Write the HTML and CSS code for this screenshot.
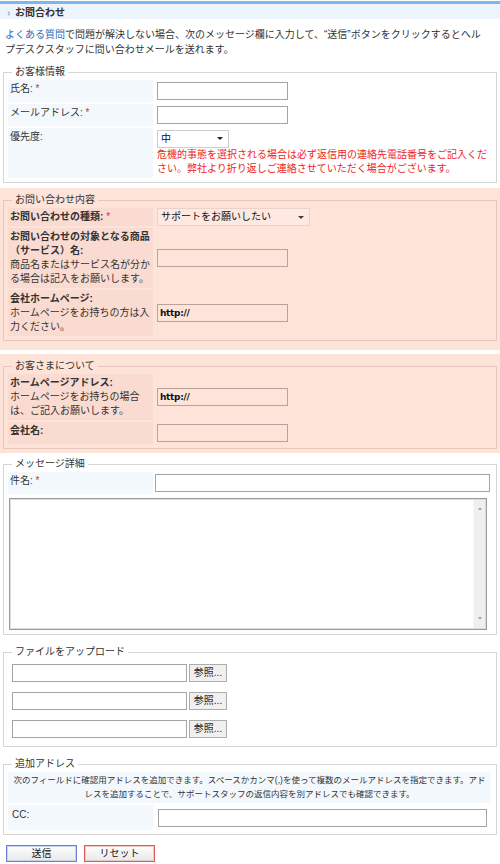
FILE: index.html
```html
<!DOCTYPE html>
<html lang="ja">
<head>
<meta charset="utf-8">
<title>お問合わせ</title>
<link rel="stylesheet" href="styles.css">
</head>
<body>
<div class="page">
  <h1 class="title"><svg class="chev" width="4" height="5" viewBox="0 0 4 5"><polyline points="0.8,0.6 3,2.5 0.8,4.4" fill="none" stroke="#6f93c4" stroke-width="1"/></svg>お問合わせ</h1>
  <p class="intro"><a href="#" class="link">よくある質問</a>で問題が解決しない場合、次のメッセージ欄に入力して、“送信”ボタンをクリックするとヘルプデスクスタッフに問い合わせメールを送れます。</p>

  <form class="form">
    <fieldset class="box">
      <legend>お客様情報</legend>
      <div class="rows">
        <div class="lab">氏名: <span class="req">*</span></div>
        <div class="val"><input class="txt" type="text"></div>
        <div class="lab">メールアドレス: <span class="req">*</span></div>
        <div class="val"><input class="txt" type="text"></div>
        <div class="lab">優先度:</div>
        <div class="val">
          <span class="sel sel-prio"><select><option>中</option></select></span>
          <p class="warn">危機的事態を選択される場合は必ず返信用の連絡先電話番号をご記入ください。弊社より折り返しご連絡させていただく場合がございます。</p>
        </div>
      </div>
    </fieldset>

    <div class="peach">
      <fieldset class="box box-peach">
        <legend>お問い合わせ内容</legend>
        <div class="rows">
          <div class="lab"><b>お問い合わせの種類:</b> <span class="req">*</span></div>
          <div class="val val-tight"><span class="sel sel-kind"><select><option>サポートをお願いしたい</option></select></span></div>
          <div class="lab"><b>お問い合わせの対象となる商品（サービス）名:</b><br>商品名またはサービス名が分かる場合は記入をお願いします。</div>
          <div class="val"><input class="txt" type="text"></div>
          <div class="lab"><b>会社ホームページ:</b><br>ホームページをお持ちの方は入力ください。</div>
          <div class="val"><input class="txt url" type="text" value="http://"></div>
        </div>
      </fieldset>
    </div>

    <div class="peach peach-second">
      <fieldset class="box box-peach">
        <legend>お客さまについて</legend>
        <div class="rows">
          <div class="lab"><b>ホームページアドレス:</b><br>ホームページをお持ちの場合は、ご記入お願いします。</div>
          <div class="val"><input class="txt url" type="text" value="http://"></div>
          <div class="lab"><b>会社名:</b></div>
          <div class="val"><input class="txt" type="text"></div>
        </div>
      </fieldset>
    </div>

    <fieldset class="box">
      <legend>メッセージ詳細</legend>
      <div class="rows">
        <div class="lab">件名: <span class="req">*</span></div>
        <div class="val val-wide"><input class="txt txt-subject" type="text"></div>
      </div>
      <div class="ta-wrap">
        <textarea class="ta"></textarea>
        <div class="sb"><span class="sb-up"></span><span class="sb-down"></span></div>
      </div>
    </fieldset>

    <fieldset class="box">
      <legend>ファイルをアップロード</legend>
      <div class="files">
        <div class="file"><input class="txt txt-file" type="text"><button type="button" class="browse">参照...</button></div>
        <div class="file"><input class="txt txt-file" type="text"><button type="button" class="browse">参照...</button></div>
        <div class="file"><input class="txt txt-file" type="text"><button type="button" class="browse">参照...</button></div>
      </div>
    </fieldset>

    <fieldset class="box">
      <legend>追加アドレス</legend>
      <div class="rows">
        <div class="note">次のフィールドに確認用アドレスを追加できます。スペースかカンマ(,)を使って複数のメールアドレスを指定できます。アド<br>レスを追加することで、サポートスタッフの返信内容を別アドレスでも確認できます。</div>
        <div class="lab lab-cc">CC:</div>
        <div class="val"><input class="txt txt-cc" type="text"></div>
      </div>
    </fieldset>

    <div class="actions">
      <button type="submit" class="btn btn-send">送信</button>
      <button type="reset" class="btn btn-reset">リセット</button>
    </div>
  </form>
</div>
</body>
</html>
```

FILE: styles.css
```css
* {
  box-sizing: border-box;
}

html,
body {
  margin: 0;
  padding: 0;
  background: #fff;
}

body {
  font-family: "Liberation Sans", "Noto Sans CJK JP", sans-serif;
  font-size: 10px;
  line-height: 14px;
  color: #333;
}

.page {
  width: 500px;
}

/* page heading bar */
.title {
  margin: 1px 0 0;
  height: 18px;
  padding: 2px 0 0 7px;
  border-top: 3px solid #7db6ea;
  background: #eef4fd;
  font-size: 10px;
  font-weight: bold;
  line-height: 13px;
  display: flex;
  align-items: center;
  gap: 4px;
}

.chev {
  display: block;
  margin-top: 2px;
}

.intro {
  margin: 0;
  padding: 8px 10px 8px 5px;
  line-height: 15px;
}

.link {
  color: #2a6fc0;
  text-decoration: none;
}

/* fieldsets */
.form {
  margin: 0;
}

.box {
  margin: 0 3px 10px;
  padding: 1px 4px 4px;
  border: 1px solid #d6d6d6;
  min-width: 0;
}

.box legend {
  margin-left: 4px;
  padding: 0 3px;
  font-size: 10px;
  line-height: 14px;
}

.peach {
  background: #fee3d9;
  padding: 5px 0 9px;
  margin: -5px 0 4px;
}

.peach-second {
  margin-top: 0;
  padding-bottom: 4px;
}

.peach .box {
  margin-bottom: 0;
}

.box-peach {
  border-color: #e7c7bc;
}

.rows {
  display: grid;
  grid-template-columns: 145px 1fr;
  gap: 2px;
}

.lab {
  background: #f3f8fd;
  padding: 2px 2px;
  line-height: 14px;
}

.box-peach .lab {
  background: #fadbd2;
}

.lab b {
  font-weight: bold;
}

.req {
  color: #f02020;
}

.val {
  display: flex;
  flex-direction: column;
  justify-content: center;
  align-items: flex-start;
  padding: 2px;
}

.val-tight {
  padding: 0 2px;
}

.val-wide {
  padding: 2px 0 2px 0;
}

.warn {
  margin: 0;
  color: #f01c1c;
  line-height: 14px;
}

/* text boxes */
.txt {
  display: block;
  width: 131px;
  height: 18px;
  margin: 0;
  padding: 1px 2px;
  border: 1px solid #a4a4a4;
  background: #fff;
  font: inherit;
  color: #222;
}

.box-peach .txt {
  background: transparent;
  border-color: #b9a29b;
}

.url {
  font-family: "DejaVu Sans", sans-serif;
  font-size: 9px;
  font-weight: bold;
  letter-spacing: -0.3px;
  color: #111;
}

.txt-subject {
  width: 335px;
}

.txt-file {
  width: 175px;
}

.txt-cc {
  width: 329px;
  margin-left: 1px;
}

/* dropdowns */
.sel {
  position: relative;
  display: block;
}

.sel select {
  display: block;
  appearance: none;
  -webkit-appearance: none;
  height: 18px;
  margin: 0;
  padding: 0 3px;
  border: 1px solid #cdcdcd;
  border-radius: 0;
  background: #fff;
  font: inherit;
  color: #111;
}

.sel::after {
  content: "";
  position: absolute;
  top: 7px;
  border-left: 3px solid transparent;
  border-right: 3px solid transparent;
  border-top: 3px solid #222;
  pointer-events: none;
}

.sel-prio select {
  width: 72px;
}

.sel-prio::after {
  right: 6px;
}

.sel-kind select {
  width: 153px;
  border-color: #ecd2c9;
  background: #fde9e2;
}

.sel-kind::after {
  right: 6px;
  top: 8px;
  border-top-color: #4a3a36;
}

/* message body with its scrollbar */
.ta-wrap {
  display: flex;
  width: 478px;
  height: 132px;
  margin: 4px 0 0 1px;
  border: 1px solid #9c9c9c;
  padding: 1px;
  background: #dcdcdc;
}

.ta {
  flex: 1;
  margin: 0;
  border: 0;
  padding: 2px;
  resize: none;
  background: #fff;
  font: inherit;
}

.sb {
  width: 12px;
  background: #efefef;
  border-left: 1px solid #f7f7f7;
  display: flex;
  flex-direction: column;
  justify-content: space-between;
  align-items: center;
  padding: 7px 0 8px;
}

.sb-up,
.sb-down {
  display: block;
  width: 0;
  height: 0;
  border-left: 2.5px solid transparent;
  border-right: 2.5px solid transparent;
}

.sb-up {
  border-bottom: 3px solid #a8a8a8;
}

.sb-down {
  border-top: 3px solid #a8a8a8;
}

/* upload rows */
.files {
  display: flex;
  flex-direction: column;
  gap: 10px;
  padding: 4px 0 4px 4px;
}

.file {
  display: flex;
  gap: 2px;
}

.browse {
  width: 38px;
  height: 18px;
  margin: 0;
  padding: 0;
  border: 1px solid #adadad;
  background: #f0f0f0;
  font: inherit;
  font-size: 10px;
  color: #222;
}

/* extra address */
.note {
  grid-column: 1 / -1;
  margin-right: 1px;
  padding: 1px 0 2px;
  background: #f3f8fd;
  font-size: 8.5px;
  line-height: 14px;
  text-align: center;
}

.lab-cc {
  padding: 3px 4px 8px;
}

/* form buttons */
.actions {
  display: flex;
  gap: 7px;
  padding-left: 6px;
}

.btn {
  width: 71px;
  height: 17px;
  margin: 0;
  padding: 0;
  font: inherit;
  font-size: 10px;
  line-height: 13px;
  color: #111;
  background: linear-gradient(#fdfdfd, #e9e9e9);
}

.btn-send {
  border: 1px solid #6b80d3;
  box-shadow: inset 0 0 0 1px #c9d2f3;
}

.btn-reset {
  border: 1px solid #d85c5c;
  box-shadow: inset 0 0 0 1px #f3c6c6;
}
```
